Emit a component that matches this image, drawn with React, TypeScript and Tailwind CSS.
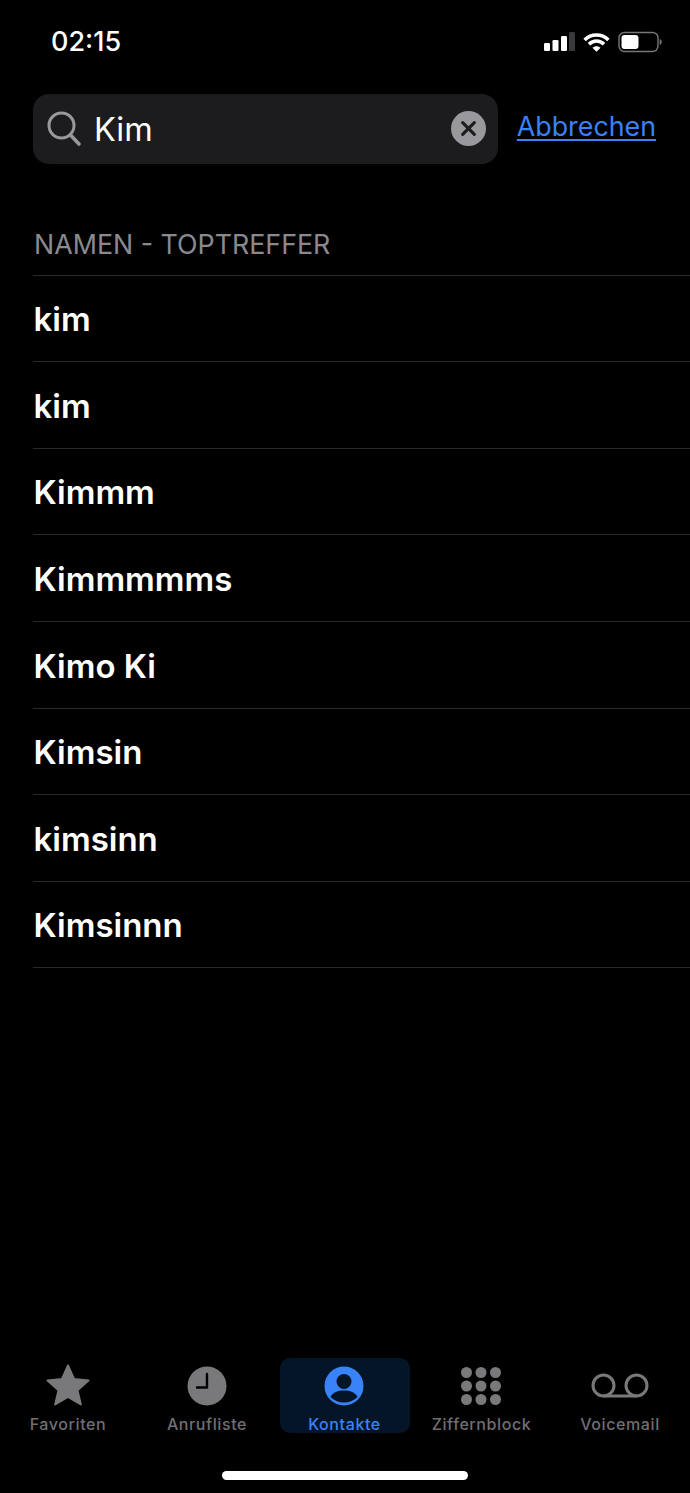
const names = ["kim", "kim", "Kimmm", "Kimmmmms", "Kimo Ki", "Kimsin", "kimsinn", "Kimsinnn"];

function StatusIcons() {
  return (
    <div className="flex items-center gap-[8px]">
      <svg width="31" height="19" viewBox="0 0 31 19" fill="none">
        <rect x="0" y="11" width="6" height="8" rx="1.3" fill="#fff" />
        <rect x="8.5" y="8" width="6" height="11" rx="1.3" fill="#fff" />
        <rect x="17" y="4" width="6" height="15" rx="1.3" fill="#fff" />
        <rect x="25" y="0" width="6" height="19" rx="1.3" fill="#3a3a3c" />
      </svg>
      <svg width="27" height="20" viewBox="0 0 27 20" fill="none">
        <path d="M1.6 8C8.3 1.4 18.7 1.4 25.4 8" stroke="#fff" strokeWidth="3.6" />
        <path d="M6 12.2C10.3 8 16.7 8 21 12.2" stroke="#fff" strokeWidth="3.6" />
        <path d="M13.5 19.8L9.4 15.7C11.7 13.6 15.3 13.6 17.6 15.7Z" fill="#fff" />
      </svg>
      <svg width="44" height="22" viewBox="0 0 44 22" fill="none">
        <rect x="1" y="1.5" width="39" height="19" rx="5.5" stroke="#77777a" strokeWidth="1.4" />
        <rect x="3.5" y="4" width="17" height="14" rx="3" fill="#fff" />
        <path d="M41.7 8C43 8.6 43.7 9.6 43.7 11C43.7 12.4 43 13.4 41.7 14Z" fill="#77777a" />
      </svg>
    </div>
  );
}

function SearchRow() {
  return (
    <div className="flex items-center mt-[12px] pl-[33px] pr-[34px]">
      <div className="flex items-center w-[465px] h-[70px] rounded-[16px] bg-[#1c1c1e] pl-[13px] pr-[12px]">
        <svg width="36" height="38" viewBox="0 0 36 38" fill="none" className="shrink-0">
          <circle cx="15.5" cy="15.5" r="12.5" stroke="#98989d" strokeWidth="3" />
          <path d="M24.5 25L33 34" stroke="#98989d" strokeWidth="3.6" strokeLinecap="round" />
        </svg>
        <span className="ml-[12px] mt-[2px] text-[32.5px] leading-[40px] text-white flex-1">Kim</span>
        <svg width="35" height="35" viewBox="0 0 36 36" fill="none" className="shrink-0 mb-[2px]">
          <circle cx="18" cy="18" r="18" fill="#98989d" />
          <path d="M12 12L24 24M24 12L12 24" stroke="#1c1c1e" strokeWidth="3.2" strokeLinecap="round" />
        </svg>
      </div>
      <a className="ml-auto mb-[6px] text-[26.8px] leading-[36px] text-[#3a82f7] underline underline-offset-[3px] decoration-[2px]">Abbrechen</a>
    </div>
  );
}

function Tab({ label, active, className, children }: { label: string; active?: boolean; className: string; children: React.ReactNode }) {
  return (
    <div className={`w-[130px] h-[75px] rounded-[10px] flex flex-col items-center ${active ? "bg-[#031526]" : ""} ${className}`}>
      <div className="h-[56px] shrink-0 flex items-center justify-center">{children}</div>
      <span className={`text-[16px] leading-[20px] tracking-[0.6px] font-medium whitespace-nowrap ${active ? "text-[#3a82f7] mr-[1px]" : "text-[#6f6f72]"}`}>{label}</span>
    </div>
  );
}

export default function App() {
  return (
    <div className="relative flex flex-col w-[690px] h-[1493px] bg-black overflow-hidden font-[Inter,sans-serif]">
      <div className="flex items-center justify-between h-[82px] pt-[1px] pl-[51px] pr-[28px]">
        <span className="text-[27px] leading-[34px] font-medium text-white">02:15</span>
        <StatusIcons />
      </div>
      <SearchRow />
      <div className="mt-[62px] pl-[34px] h-[48.8px] text-[26.8px] leading-[36px] text-[#8a8a8e]">NAMEN - TOPTREFFER</div>
      <div className="ml-[33px] border-b border-[#2a2a2c]">
        {names.map((n, i) => (
          <div key={i} className="flex items-center h-[86.55px] pt-[3px] pl-[0.5px] border-t border-[#2a2a2c] text-[33px] font-semibold text-white">
            {n}
          </div>
        ))}
      </div>
      <div className="flex-1" />
      <div className="flex pb-[60px]">
        <Tab label="Favoriten" className="ml-[3px]">
          <svg width="44" height="42" viewBox="0 0 44 42" className="mb-[2px]"><path d="M22 1.5L28 15L42.5 16.5L31.5 26.3L34.8 40.5L22 33L9.2 40.5L12.5 26.3L1.5 16.5L16 15Z" fill="#79797c" stroke="#79797c" strokeWidth="2" strokeLinejoin="round" /></svg>
        </Tab>
        <Tab label="Anrufliste" className="ml-[9px]">
          <svg width="40" height="40" viewBox="0 0 40 40"><circle cx="20" cy="20" r="19.5" fill="#79797c" /><path d="M20 8V21.5H10" stroke="#000" strokeWidth="2.4" fill="none" strokeLinecap="round" strokeLinejoin="round" /></svg>
        </Tab>
        <Tab label="Kontakte" active className="ml-[8px]">
          <svg width="40" height="40" viewBox="0 0 40 40" className="mr-[2px]"><circle cx="20" cy="20" r="19.5" fill="#3a82f7" /><circle cx="20" cy="15.5" r="7.5" fill="#031526" /><path d="M6.5 31C9 26 14 24.5 20 24.5C26 24.5 31 26 33.5 31C30 34.5 25.5 36.5 20 36.5C14.5 36.5 10 34.5 6.5 31Z" fill="#031526" /></svg>
        </Tab>
        <Tab label="Ziffernblock" className="ml-[6.5px]">
          <svg width="40" height="38" viewBox="0 0 40 38" fill="#79797c" className="mr-[2px]">
            {[5.5, 19, 32.5].map((y) => [5.5, 20, 34.5].map((x) => <circle key={`${x}-${y}`} cx={x} cy={y} r="5.5" />))}
          </svg>
        </Tab>
        <Tab label="Voicemail" className="ml-[8.5px]">
          <svg width="58" height="26" viewBox="0 0 58 26" fill="none" stroke="#79797c" strokeWidth="3"><circle cx="12.5" cy="12.5" r="10.5" /><circle cx="45.5" cy="12.5" r="10.5" /><path d="M12.5 23H45.5" /></svg>
        </Tab>
      </div>
      <div className="absolute left-[222px] top-[1471px] w-[246px] h-[9px] rounded-full bg-white" />
    </div>
  );
}
